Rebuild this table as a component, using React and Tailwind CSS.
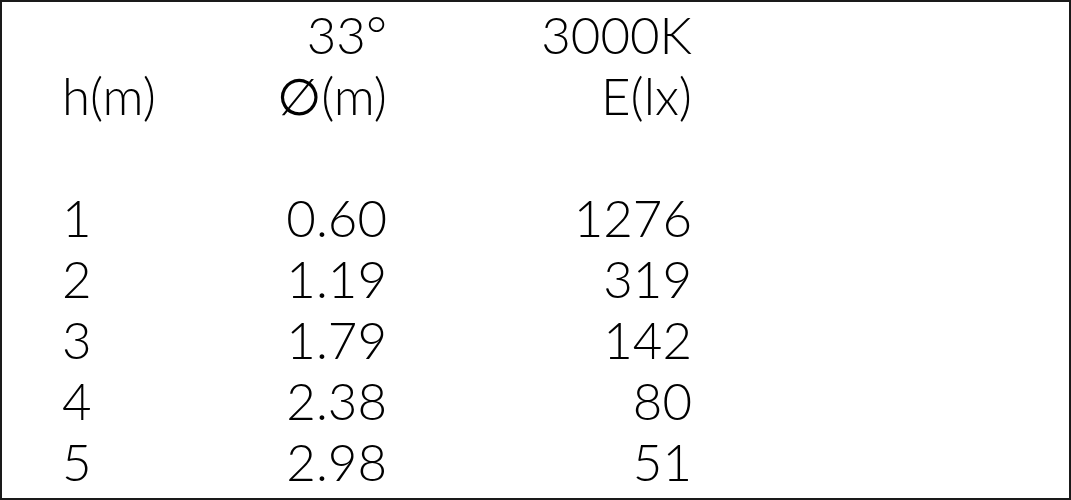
import React from 'react';

const rows = [
  ['1', '0.60', '1276'],
  ['2', '1.19', '319'],
  ['3', '1.79', '142'],
  ['4', '2.38', '80'],
  ['5', '2.98', '51'],
];

const Cell = ({ children, right }) => (
  <div className={right ? 'text-right' : 'text-left'}>{children}</div>
);

const App = () => {
  return (
    <div className="w-[1071px] h-[500px] bg-white border-2 border-[#1a1a1a] box-border overflow-hidden">
      <div
        className="grid grid-cols-[124px_201px_305px] pl-[60px] pt-[2px] text-[51px] leading-[61px] text-black font-light"
        style={{ fontFamily: '"Lato", "Open Sans", sans-serif' }}
      >
        <Cell></Cell>
        <Cell right>33°</Cell>
        <Cell right>3000K</Cell>

        <Cell>h(m)</Cell>
        <Cell right>∅(m)</Cell>
        <Cell right>E(lx)</Cell>

        <Cell>&nbsp;</Cell>
        <Cell></Cell>
        <Cell></Cell>

        {rows.map(([h, d, e]) => (
          <React.Fragment key={h}>
            <Cell>{h}</Cell>
            <Cell right>{d}</Cell>
            <Cell right>{e}</Cell>
          </React.Fragment>
        ))}
      </div>
    </div>
  );
};

export default App;
